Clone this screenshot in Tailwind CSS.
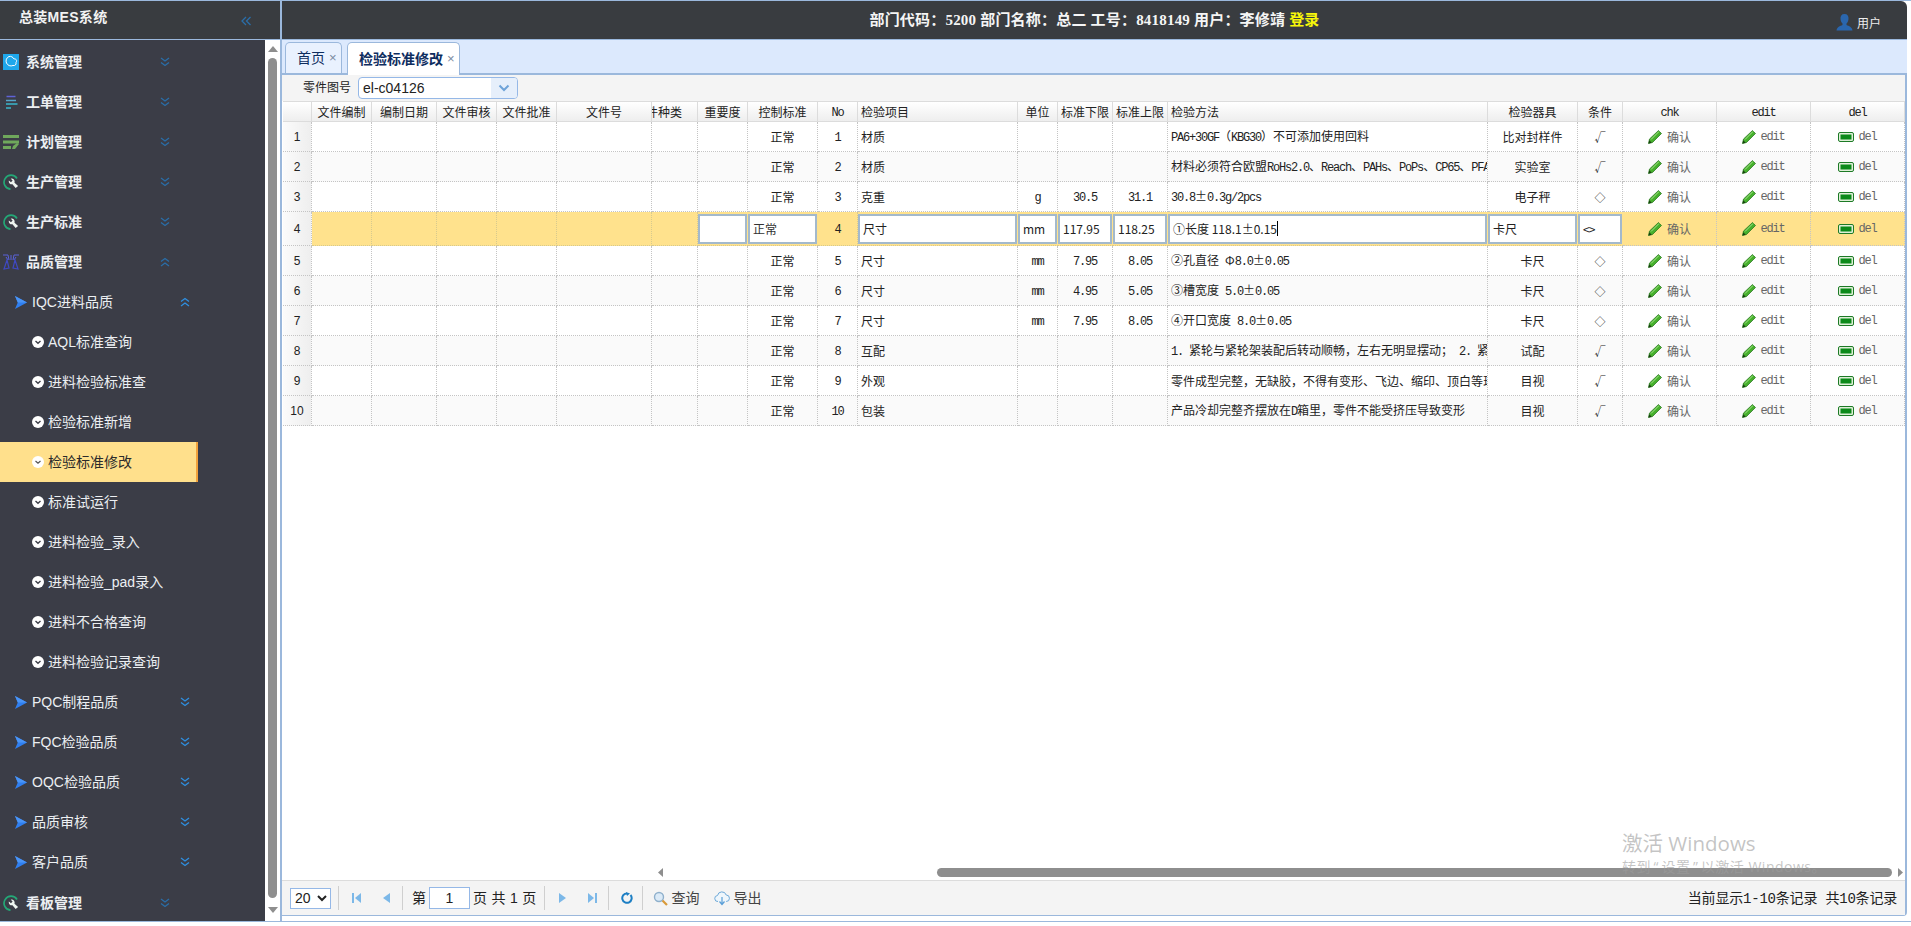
<!DOCTYPE html>
<html lang="zh-CN">
<head>
    <meta charset="UTF-8">
    <meta name="viewport" content="width=device-width, initial-scale=1.0">
    <title>总装MES系统</title>
    <script src="https://cdn.jsdelivr.net/npm/@tailwindcss/browser@4"></script>
</head>
<body class="bg-white font-['Liberation_Sans','Noto_Sans_CJK_SC',sans-serif] overflow-hidden">

<!-- shared icons -->
<svg class="absolute w-0 h-0">
    <symbol id="i-down" viewBox="0 0 10 10"><path d="M1 1l4 3 4-3M1 5.500l4 3 4-3" fill="none" stroke="currentColor" stroke-width="1.300"/></symbol>
    <symbol id="i-up" viewBox="0 0 10 10"><path d="M1 4.500l4-3 4 3M1 9l4-3 4 3" fill="none" stroke="currentColor" stroke-width="1.300"/></symbol>
    <symbol id="i-plane" viewBox="0 0 14 14"><path d="M0 0l13 7-13 7 3-7z" fill="#2f7ff0"/><path d="M0 0l13 7H3z" fill="#4a95f7"/></symbol>
    <symbol id="i-dot" viewBox="0 0 12 12"><circle cx="6" cy="6" r="6" fill="#fff"/><path d="M3.500 5l2.500 2.200L8.500 5" fill="none" stroke="#3b3d47" stroke-width="1.400"/></symbol>
    <symbol id="i-wrench" viewBox="0 0 16 16">
        <path d="M14 4.500A7 7 0 1 0 7.500 15.200" fill="none" stroke="#24a877" stroke-width="1.700"/>
        <path transform="translate(2.400 2.400) scale(.82)" d="M4.200 5a3.700 3.700 0 0 0 4.400 4.600l3.900 4.600 3-2.600-4.400-4a3.700 3.700 0 0 0-4.500-4.800l2.200 2.300-2 1.900z" fill="#eef5f0"/>
    </symbol>
    <symbol id="i-pencil" viewBox="0 0 14 14">
        <path d="M.5 13.500l1-4.500L10.500.5l3 3-9 9z" fill="#46b02c" stroke="#1f6e17" stroke-width=".7"/>
        <path d="M3 9.500l8-8" stroke="#a5e58a" stroke-width="1"/>
        <path d="M.5 13.500l.8-3.200 2.400 2.400z" fill="#17420f"/>
    </symbol>
    <symbol id="i-del" viewBox="0 0 16 10">
        <rect x=".5" y=".5" width="15" height="9" rx="1.500" fill="#dff0d8" stroke="#1d7a26"/>
        <rect x="2.500" y="2.500" width="11" height="5" fill="#0c8a1a"/>
    </symbol>
</svg>

<div class="w-[1911px] h-[922px] flex border-t border-b border-[#9bb8dc]">

    <!-- Sidebar -->
    <aside class="w-[280px] shrink-0 flex flex-col">
        <div class="h-[39px] shrink-0 bg-[#393c40] border-b border-[#9bb8dc] flex items-center justify-between pl-[19px] pr-[29px]">
            <span class="text-[14px] font-bold tracking-[0.3px] text-[#f2f2f2] -mt-[6px]">总装MES系统</span>
            <svg class="w-[10px] h-[10px] text-[#2a6ea8] mt-[2px]" viewBox="0 0 10 10"><path d="M5 1L1 5l4 4M9.500 1l-4 4 4 4" fill="none" stroke="currentColor" stroke-width="1.300"/></svg>
        </div>
        <div class="flex-1 flex min-h-0">
            <nav class="w-[265px] bg-[#3b3d47] pt-[2px] text-[14px] text-[#eceff2]">
                <a class="h-[40px] flex items-center pl-[3px] font-bold">
                    <svg class="w-4 h-4 mr-[7px]" viewBox="0 0 16 16"><rect width="16" height="16" fill="#1ea7ec"/><path d="M6 2.500a4.500 4.500 0 1 0 4 9c2 .5 3.500-1 3-3 1.500-2 0-4-2-3.500C10 3 8 2 6 2.500z" fill="none" stroke="#fff" stroke-width="1"/></svg>
                    <span class="w-[134px]">系统管理</span>
                    <svg class="w-[10px] h-[10px] text-[#2a6ea8]"><use href="#i-down"/></svg>
                </a>
                <a class="h-[40px] flex items-center pl-[3px] font-bold">
                    <svg class="w-4 h-4 mr-[7px]" viewBox="0 0 16 16"><path d="M3.500 2.500h9" stroke="#5f63d6" stroke-width="1.500"/><path d="M3 6.500h10" stroke="#56a6c9" stroke-width="1.500"/><path d="M3 10h11.500" stroke="#3ab9cd" stroke-width="1.500"/><path d="M3 14h5" stroke="#3ab9cd" stroke-width="1.500"/></svg>
                    <span class="w-[134px]">工单管理</span>
                    <svg class="w-[10px] h-[10px] text-[#2a6ea8]"><use href="#i-down"/></svg>
                </a>
                <a class="h-[40px] flex items-center pl-[3px] font-bold">
                    <svg class="w-4 h-4 mr-[7px]" viewBox="0 0 16 16"><path d="M0 1h16v3H0z" fill="#6fa85c"/><path d="M0 6.500h16v3H0z" fill="#6fa85c"/><path d="M0 12h8v3H0z" fill="#6fa85c"/><path d="M9 15l1-3 4-3 2 1-4 5z" fill="#6fa85c"/></svg>
                    <span class="w-[134px]">计划管理</span>
                    <svg class="w-[10px] h-[10px] text-[#2a6ea8]"><use href="#i-down"/></svg>
                </a>
                <a class="h-[40px] flex items-center pl-[3px] font-bold">
                    <svg class="w-4 h-4 mr-[7px]"><use href="#i-wrench"/></svg>
                    <span class="w-[134px]">生产管理</span>
                    <svg class="w-[10px] h-[10px] text-[#2a6ea8]"><use href="#i-down"/></svg>
                </a>
                <a class="h-[40px] flex items-center pl-[3px] font-bold">
                    <svg class="w-4 h-4 mr-[7px]"><use href="#i-wrench"/></svg>
                    <span class="w-[134px]">生产标准</span>
                    <svg class="w-[10px] h-[10px] text-[#2a6ea8]"><use href="#i-down"/></svg>
                </a>
                <a class="h-[40px] flex items-center pl-[3px] font-bold">
                    <svg class="w-4 h-4 mr-[7px]" viewBox="0 0 16 16"><path d="M0 1h5l1 5M16 1h-5l-1 5" fill="none" stroke="#5a62d8" stroke-width="1"/><path d="M3 3l2 3M13 3l-2 3M8 1v5" stroke="#5a62d8" stroke-width="1"/><path d="M4 6l-3 9 5-1zM12 6l3 9-5-1z" fill="none" stroke="#3f49c0" stroke-width="1.200"/></svg>
                    <span class="w-[134px]">品质管理</span>
                    <svg class="w-[10px] h-[10px] text-[#2a6ea8]"><use href="#i-up"/></svg>
                </a>
                <a class="h-[40px] flex items-center pl-[15px]">
                    <svg class="w-[13px] h-[13px] mr-[4px]"><use href="#i-plane"/></svg>
                    <span class="w-[148px]">IQC进料品质</span>
                    <svg class="w-[10px] h-[10px] text-[#2f8fe0]"><use href="#i-up"/></svg>
                </a>
                <a class="h-[40px] flex items-center pl-[32px]"><svg class="w-3 h-3 mr-1"><use href="#i-dot"/></svg>AQL标准查询</a>
                <a class="h-[40px] flex items-center pl-[32px]"><svg class="w-3 h-3 mr-1"><use href="#i-dot"/></svg>进料检验标准查</a>
                <a class="h-[40px] flex items-center pl-[32px]"><svg class="w-3 h-3 mr-1"><use href="#i-dot"/></svg>检验标准新增</a>
                <a class="h-[40px] w-[198px] flex items-center pl-[32px] bg-[#ffe08c] border-r-2 border-[#f2a23c] text-[#2b2b2b]"><svg class="w-3 h-3 mr-1"><circle cx="6" cy="6" r="6" fill="#fff"/><path d="M3.500 5l2.500 2.200L8.500 5" fill="none" stroke="#555" stroke-width="1.200"/></svg>检验标准修改</a>
                <a class="h-[40px] flex items-center pl-[32px]"><svg class="w-3 h-3 mr-1"><use href="#i-dot"/></svg>标准试运行</a>
                <a class="h-[40px] flex items-center pl-[32px]"><svg class="w-3 h-3 mr-1"><use href="#i-dot"/></svg>进料检验_录入</a>
                <a class="h-[40px] flex items-center pl-[32px]"><svg class="w-3 h-3 mr-1"><use href="#i-dot"/></svg>进料检验_pad录入</a>
                <a class="h-[40px] flex items-center pl-[32px]"><svg class="w-3 h-3 mr-1"><use href="#i-dot"/></svg>进料不合格查询</a>
                <a class="h-[40px] flex items-center pl-[32px]"><svg class="w-3 h-3 mr-1"><use href="#i-dot"/></svg>进料检验记录查询</a>
                <a class="h-[40px] flex items-center pl-[15px]">
                    <svg class="w-[13px] h-[13px] mr-[4px]"><use href="#i-plane"/></svg>
                    <span class="w-[148px]">PQC制程品质</span>
                    <svg class="w-[10px] h-[10px] text-[#2f8fe0]"><use href="#i-down"/></svg>
                </a>
                <a class="h-[40px] flex items-center pl-[15px]">
                    <svg class="w-[13px] h-[13px] mr-[4px]"><use href="#i-plane"/></svg>
                    <span class="w-[148px]">FQC检验品质</span>
                    <svg class="w-[10px] h-[10px] text-[#2f8fe0]"><use href="#i-down"/></svg>
                </a>
                <a class="h-[40px] flex items-center pl-[15px]">
                    <svg class="w-[13px] h-[13px] mr-[4px]"><use href="#i-plane"/></svg>
                    <span class="w-[148px]">OQC检验品质</span>
                    <svg class="w-[10px] h-[10px] text-[#2f8fe0]"><use href="#i-down"/></svg>
                </a>
                <a class="h-[40px] flex items-center pl-[15px]">
                    <svg class="w-[13px] h-[13px] mr-[4px]"><use href="#i-plane"/></svg>
                    <span class="w-[148px]">品质审核</span>
                    <svg class="w-[10px] h-[10px] text-[#2f8fe0]"><use href="#i-down"/></svg>
                </a>
                <a class="h-[40px] flex items-center pl-[15px]">
                    <svg class="w-[13px] h-[13px] mr-[4px]"><use href="#i-plane"/></svg>
                    <span class="w-[148px]">客户品质</span>
                    <svg class="w-[10px] h-[10px] text-[#2f8fe0]"><use href="#i-down"/></svg>
                </a>
                <a class="h-[40px] mt-[1px] flex items-center pl-[3px] font-bold">
                    <svg class="w-4 h-4 mr-[7px]"><use href="#i-wrench"/></svg>
                    <span class="w-[134px]">看板管理</span>
                    <svg class="w-[10px] h-[10px] text-[#2a6ea8]"><use href="#i-down"/></svg>
                </a>
            </nav>
            <!-- sidebar scrollbar -->
            <div class="w-[15px] bg-white flex flex-col items-center">
                <svg class="w-[10px] h-[6px] mt-[6px] shrink-0" viewBox="0 0 10 6"><path d="M5 0l5 6H0z" fill="#8e8e8e"/></svg>
                <div class="w-[9px] flex-1 mt-[6px] mb-[9px] rounded-full bg-[#8e8e8e]"></div>
                <svg class="w-[10px] h-[6px] mb-[8px] shrink-0" viewBox="0 0 10 6"><path d="M5 6L0 0h10z" fill="#8e8e8e"/></svg>
            </div>
        </div>
    </aside>

    <!-- Main -->
    <main class="w-[1627px] shrink-0 flex flex-col border-l-2 border-[#9bb8dc]">
        <header class="h-[39px] shrink-0 bg-[#393c40] border-b border-[#9bb8dc] rounded-tr-[6px] relative flex items-center justify-center">
            <span class="text-[15px] font-bold tracking-[0.2px] text-[#f5f5f5] font-['Liberation_Serif','Noto_Sans_CJK_SC',serif]">部门代码：5200 部门名称：总二 工号：8418149 用户：李修靖 <span class="text-[#f7f70a]">登录</span></span>
            <div class="absolute left-[1554px] top-[11px] flex items-center">
                <svg class="w-[17px] h-[17px]" viewBox="0 0 17 17"><path d="M8.500 0c3 0 4.300 2 4 5-.2 2-1 3.500-2 4.500v1.500c2.500 1 5.500 2 6 5.500H.500c.5-3.500 3.500-4.500 6-5.500V9.500c-1-1-1.800-2.500-2-4.500-.3-3 1-5 4-5z" fill="#2a66ad"/></svg>
                <span class="text-[12px] text-[#eee] ml-[4px] mt-[3px]">用户</span>
            </div>
        </header>

        <!-- Tabs -->
        <div class="h-[35px] shrink-0 bg-[#dce9fd] border-b-2 border-[#9bb8dc] flex items-end pl-[3px] gap-[5px]">
            <div class="w-[57px] h-[31px] rounded-t-[5px] border border-b-0 border-[#9bb8dc] bg-[#e9f1fe] flex items-center pl-[11px] text-[14px] text-[#0e2d5f]">
                首页<span class="text-[13px] text-[#7a8aa0] ml-[4px]">×</span>
            </div>
            <div class="w-[113px] h-[33px] -mb-[2px] rounded-t-[5px] border border-b-0 border-[#9bb8dc] bg-white flex items-center pl-[11px] text-[14px] font-bold text-[#0e2d5f]">
                检验标准修改<span class="text-[13px] font-normal text-[#7a8aa0] ml-[4px]">×</span>
            </div>
        </div>

        <!-- Panel -->
        <section class="flex-1 min-h-0 flex flex-col border-r-2 border-b border-[#9bb8dc] mb-[5px] rounded-br-[4px]">
            <div class="h-[26px] shrink-0 bg-[#f4f4f4] flex items-center pl-[21px]">
                <label class="text-[12px] text-[#222] w-[55px]">零件图号</label>
                <div class="w-[160px] h-[22px] bg-white border border-[#95b8e7] rounded-[4px] flex items-center overflow-hidden">
                    <span class="flex-1 pl-[4px] text-[14px] text-[#222]">el-c04126</span>
                    <span class="w-[26px] h-full bg-[#e6effb] flex items-center justify-center">
                        <svg class="w-[12px] h-[8px]" viewBox="0 0 12 8"><path d="M1.500 1.500L6 6l4.500-4.500" fill="none" stroke="#6ea3d8" stroke-width="2"/></svg>
                    </span>
                </div>
            </div>

            <div class="flex-1 min-h-0 relative overflow-hidden bg-white">
                <table class="table-fixed ml-px w-[1622px] border-separate border-spacing-0 text-[12px] leading-[16px] text-[#222] font-['Noto_Sans_CJK_SC',sans-serif]">
                    <colgroup>
                        <col class="w-[29px]"><col class="w-[60px]"><col class="w-[65px]"><col class="w-[60px]"><col class="w-[60px]">
                        <col class="w-[95px]"><col class="w-[46px]"><col class="w-[50px]"><col class="w-[70px]"><col class="w-[40px]">
                        <col class="w-[160px]"><col class="w-[40px]"><col class="w-[55px]"><col class="w-[55px]"><col class="w-[320px]">
                        <col class="w-[90px]"><col class="w-[45px]"><col class="w-[94px]"><col class="w-[94px]"><col class="w-[94px]">
                    </colgroup>
                    <thead id="head"></thead>
                    <tbody id="rows"></tbody>
                </table>

                <!-- horizontal scrollbar -->
                <div class="absolute left-[371px] right-0 bottom-[3px] h-[9px] flex items-center">
                    <svg class="w-[5px] h-[9px] ml-[5px]" viewBox="0 0 5 9"><path d="M5 0v9L0 4.500z" fill="#8e8e8e"/></svg>
                    <div class="h-[9px] ml-[274px] w-[955px] rounded-full bg-[#8e8e8e]"></div>
                    <svg class="w-[5px] h-[9px] ml-[6px]" viewBox="0 0 5 9"><path d="M0 0v9l5-4.500z" fill="#8e8e8e"/></svg>
                </div>

                <!-- windows watermark -->
                <div class="absolute left-[1340px] top-[728px] text-[#9d9d9d]/60 font-['Open_Sans','Noto_Sans_CJK_SC',sans-serif] pointer-events-none whitespace-nowrap">
                    <div class="text-[20.5px] leading-[28px]">激活 Windows</div>
                    <div class="text-[14px] leading-[20px] tracking-[0.5px]">转到<span class="mx-[2.5px]">“</span>设置<span class="mx-[2.5px]">”</span>以激活 Windows。</div>
                </div>
            </div>

            <!-- Pager -->
            <div class="h-[35px] shrink-0 bg-[#f4f4f4] border-t border-[#dcdcdc] flex items-center text-[14px] text-[#222] relative">
                <select class="ml-[8px] w-[41px] h-[21px] bg-white border border-[#95b8e7] text-[14px] font-['Liberation_Sans',sans-serif]"><option>20</option></select>
                <span class="ml-[7px] w-px h-[24px] bg-[#cfcfcf]"></span>
                <svg class="ml-[13px] w-[9px] h-[10px]" viewBox="0 0 9 10"><path d="M0 0h2v10H0z" fill="#7cb8e8"/><path d="M9 0v10L3 5z" fill="#7cb8e8"/></svg>
                <svg class="ml-[22px] w-[7px] h-[10px]" viewBox="0 0 7 10"><path d="M7 0v10L0 5z" fill="#7cb8e8"/></svg>
                <span class="ml-[12px] w-px h-[24px] bg-[#cfcfcf]"></span>
                <span class="ml-[9px]">第</span>
                <div class="ml-[3px] w-[41px] h-[22px] bg-white border border-[#95b8e7] flex items-center justify-center font-['Liberation_Sans',sans-serif]">1</div>
                <span class="ml-[3px] whitespace-pre tracking-[0.3px]">页 共 1 页</span>
                <span class="ml-[7px] w-px h-[24px] bg-[#cfcfcf]"></span>
                <svg class="ml-[14px] w-[7px] h-[10px]" viewBox="0 0 7 10"><path d="M0 0v10l7-5z" fill="#7cb8e8"/></svg>
                <svg class="ml-[22px] w-[9px] h-[10px]" viewBox="0 0 9 10"><path d="M0 0v10l6-5z" fill="#7cb8e8"/><path d="M7 0h2v10H7z" fill="#7cb8e8"/></svg>
                <span class="ml-[11px] w-px h-[24px] bg-[#cfcfcf]"></span>
                <svg class="ml-[12px] w-[12px] h-[12px]" viewBox="0 0 12 12"><path d="M9.500 3a4.700 4.700 0 1 1-3.500-1.600" fill="none" stroke="#1d7fc4" stroke-width="2"/><path d="M5 0l4 1.500L6 4z" fill="#1d7fc4"/></svg>
                <span class="ml-[9px] w-px h-[24px] bg-[#cfcfcf]"></span>
                <svg class="ml-[10px] w-[15px] h-[15px]" viewBox="0 0 15 15"><circle cx="6" cy="6" r="4.500" fill="#dbeaf7" stroke="#8fb0cc" stroke-width="1.400"/><path d="M9.500 9.500L14 14" stroke="#d99a3a" stroke-width="2.200"/></svg>
                <span class="ml-[4px] text-[#444]">查询</span>
                <svg class="ml-[14px] w-[16px] h-[16px]" viewBox="0 0 16 16"><path d="M4 11.500a3 3 0 0 1-.5-6 4.500 4.500 0 0 1 8.700-.5 3.200 3.200 0 0 1 0 6.500" fill="#eef6fc" stroke="#6ea9d8"/><path d="M8 7v7M5.500 11.500L8 14.500l2.500-3" fill="none" stroke="#5a9fd8" stroke-width="1.200"/></svg>
                <span class="ml-[4px] text-[#444]">导出</span>
                <span class="absolute right-[8px] top-[8px] font-['Liberation_Mono','Noto_Sans_CJK_SC',monospace] whitespace-nowrap tracking-[-0.2px]">当前显示1-10条记录 共10条记录</span>
            </div>
        </section>
    </main>
</div>

<script>
    // half width latin, like the simsun cells
    const half = s => s.replace(/[A-Za-z0-9+.\/\- <>]+/g, m =>
        `<span class="font-['Liberation_Mono',monospace] tracking-[-1.2px] whitespace-pre">${m.replace(/</g, '&lt;').replace(/>/g, '&gt;')}</span>`);

    const heads = [
        ['', ''], ['文件编制', 'c'], ['编制日期', 'c'], ['文件审核', 'c'], ['文件批准', 'c'], ['文件号', 'c'],
        ['文件种类', 'clip'], ['重要度', 'c'], ['控制标准', 'c'], ['No', 'c'], ['检验项目', 'l'], ['单位', 'c'],
        ['标准下限', 'c'], ['标准上限', 'c'], ['检验方法', 'l'], ['检验器具', 'c'], ['条件', 'c'], ['chk', 'c'], ['edit', 'c'], ['del', 'c']
    ];

    const data = [
        ['材质', '', '', '', 'PA6+30GF（KBG30）不可添加使用回料', '比对封样件', '√'],
        ['材质', '', '', '', '材料必须符合欧盟RoHs2.0、Reach、PAHs、PoPs、CP65、PFA', '实验室', '√'],
        ['克重', 'g', '30.5', '31.1', '30.8±0.3g/2pcs', '电子秤', '◇'],
        ['尺寸', 'mm', '117.95', '118.25', '①长度 118.1±0.15', '卡尺', '<>'],
        ['尺寸', 'mm', '7.95', '8.05', '②孔直径 Φ8.0±0.05', '卡尺', '◇'],
        ['尺寸', 'mm', '4.95', '5.05', '③槽宽度 5.0±0.05', '卡尺', '◇'],
        ['尺寸', 'mm', '7.95', '8.05', '④开口宽度 8.0±0.05', '卡尺', '◇'],
        ['互配', '', '', '', '1. 紧轮与紧轮架装配后转动顺畅，左右无明显摆动； 2. 紧', '试配', '√'],
        ['外观', '', '', '', '零件成型完整，无缺胶，不得有变形、飞边、缩印、顶白等现', '目视', '√'],
        ['包装', '', '', '', '产品冷却完整齐摆放在D箱里，零件不能受挤压导致变形', '目视', '√']
    ];

    const thBase = 'h-[21px] p-0 font-normal border-y border-r border-[#dcdcdc] bg-gradient-to-b from-white to-[#eeeeee] overflow-hidden whitespace-nowrap';
    document.getElementById('head').innerHTML = '<tr>' + heads.map(([t, k]) => {
        if (k === 'clip') return `<th class="${thBase}"><div class="flex justify-end pr-[15px] overflow-hidden">${t}</div></th>`;
        const align = k === 'l' ? 'text-left pl-[3px]' : 'text-center';
        return `<th class="${thBase} ${align}">${half(t)}</th>`;
    }).join('') + '</tr>';

    const cell = 'p-0 border-r border-b border-dotted border-[#c4c4c4] overflow-hidden whitespace-nowrap';
    const box = 'h-[30px] bg-white border-2 border-[#a3b9cc] flex items-center pl-[3px] text-[12px] overflow-hidden whitespace-nowrap';
    const ops = `
        <td class="${cell} text-center"><div class="flex items-center justify-center text-[#666]"><svg class="w-[14px] h-[14px] mr-[5px]"><use href="#i-pencil"/></svg>确认</div></td>
        <td class="${cell} text-center"><div class="flex items-center justify-center text-[#666]"><svg class="w-[14px] h-[14px] mr-[4px]"><use href="#i-pencil"/></svg>${half('edit')}</div></td>
        <td class="${cell} text-center"><div class="flex items-center justify-center text-[#666]"><svg class="w-[16px] h-[10px] mr-[4px]"><use href="#i-del"/></svg>${half('del')}</div></td>`;

    document.getElementById('rows').innerHTML = data.map((r, i) => {
        const n = i + 1;
        const num = `<td class="${cell} font-['Liberation_Sans',sans-serif] text-center bg-gradient-to-r from-[#fbfbfb] to-[#eeeeee]">${n}</td>`;
        if (n === 4) {
            const blank = `<td class="p-0 border-r border-b border-dotted border-[#d6c98e]"></td>`.repeat(6);
            const inp = (t, extra = '') => `<td class="p-0 pr-px border-b border-dotted border-[#d6c98e]"><div class="${box} ${extra}">${t}</div></td>`;
            return `<tr class="h-[34px] bg-[#ffe28d]">${num}${blank}
                ${inp('')}${inp('正常', 'text-[#333]')}
                <td class="${cell} border-[#d6c98e] text-center">${half('4')}</td>
                ${inp('尺寸')}${inp('mm')}${inp('117.95')}${inp('118.25')}
                ${inp('①长度 118.1±0.15<span class="w-px h-[15px] bg-black"></span>')}
                ${inp('卡尺')}${inp('<span class="tracking-[-1px]">&lt;&gt;</span>')}
                ${ops}</tr>`;
        }
        const even = n % 2 === 0 ? 'bg-[#fafafa]' : 'bg-white';
        const empty = `<td class="${cell}"></td>`.repeat(7);
        return `<tr class="h-[30px] ${even}">${num}${empty}
            <td class="${cell} text-center">正常</td>
            <td class="${cell} text-center">${half(String(n))}</td>
            <td class="${cell} pl-[3px]">${r[0]}</td>
            <td class="${cell} text-center">${half(r[1])}</td>
            <td class="${cell} text-center">${half(r[2])}</td>
            <td class="${cell} text-center">${half(r[3])}</td>
            <td class="${cell} pl-[3px]">${half(r[4])}</td>
            <td class="${cell} text-center">${r[5]}</td>
            <td class="${cell} text-center text-[11px]">${r[6]}</td>
            ${ops}</tr>`;
    }).join('');
</script>

</body>
</html>
